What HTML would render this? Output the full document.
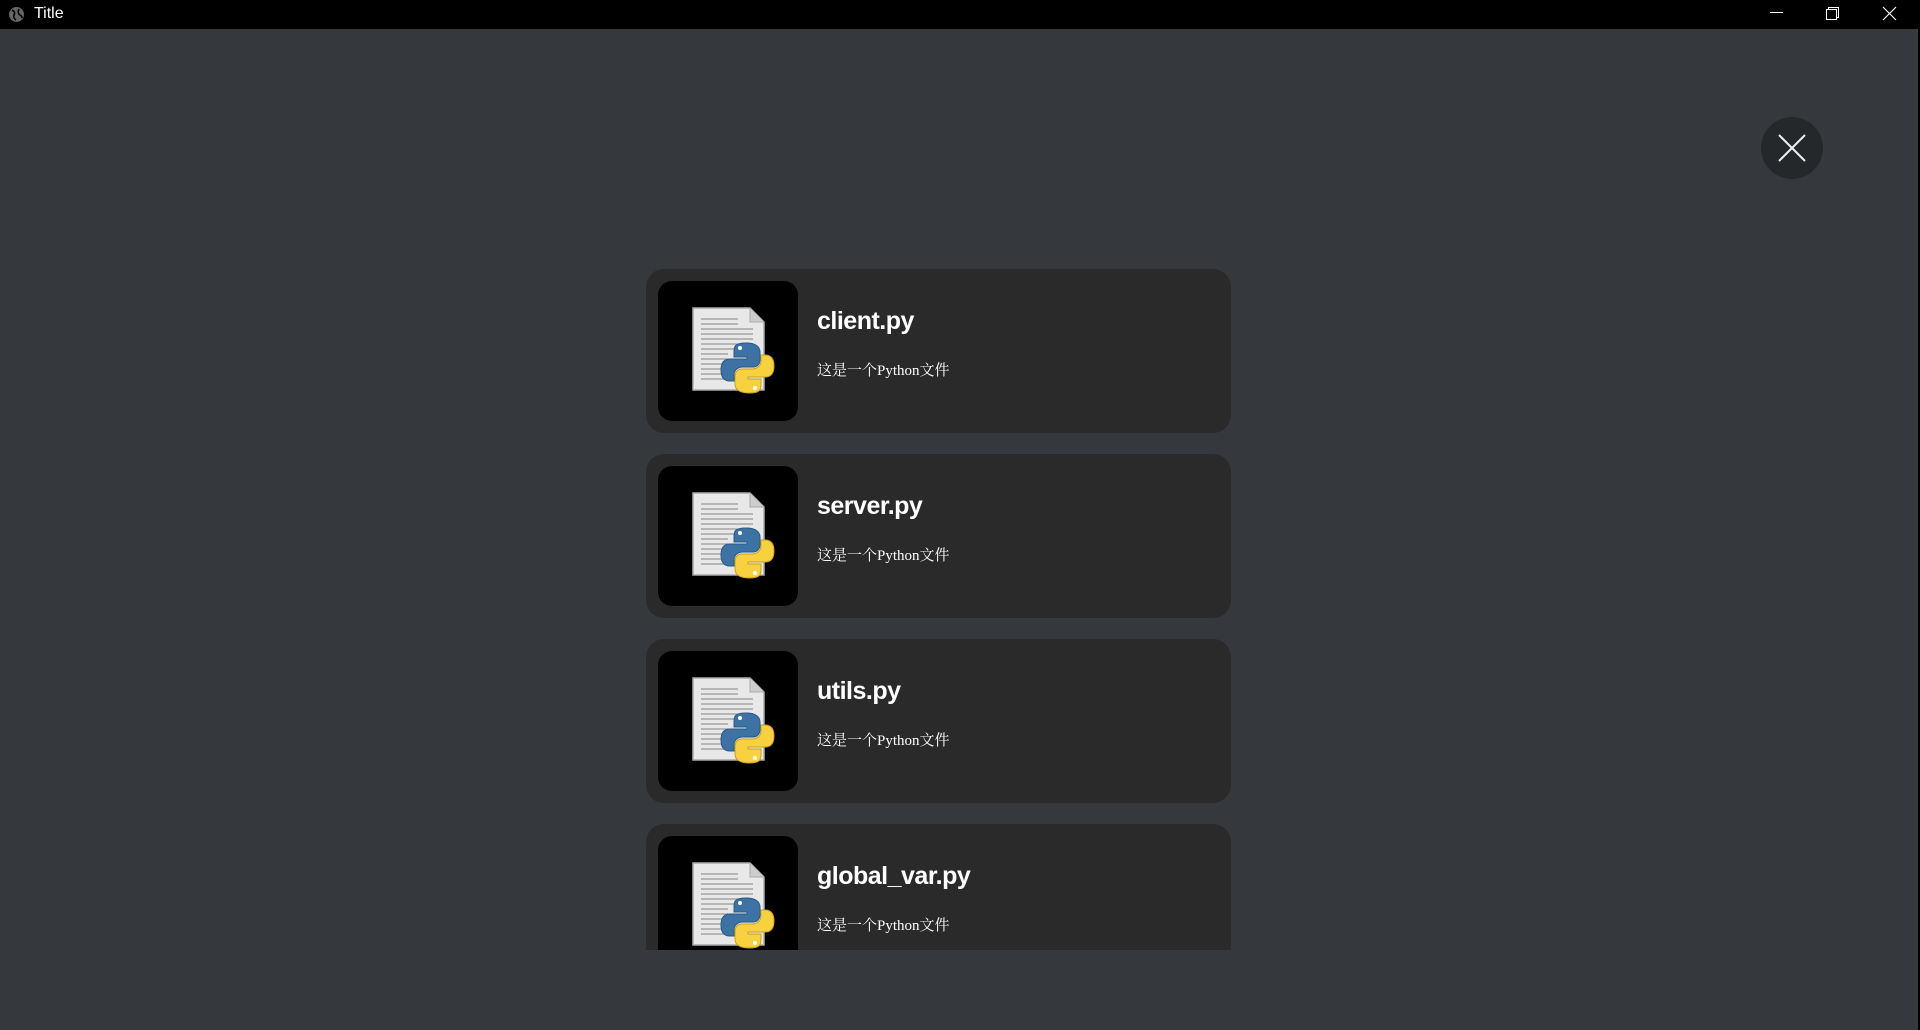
<!DOCTYPE html>
<html><head><meta charset="utf-8"><style>
*{margin:0;padding:0;box-sizing:border-box}
body{width:1920px;height:1030px;background:#35383d;position:relative;overflow:hidden;font-family:"Liberation Sans","Noto Sans CJK SC",sans-serif}
.tb{position:absolute;left:0;top:0;width:1920px;height:29px;background:#000}
.tb .t{position:absolute;left:34px;top:5px;color:#fff;font-size:16px}
.strip{position:absolute;right:0;top:0;width:2px;height:1030px;background:#000}
.cb{position:absolute;left:1761px;top:117px;width:62px;height:62px;border-radius:50%;background:#25282b}
.list{position:absolute;left:646px;top:269px;width:585px;height:681px;overflow:hidden}
.card{position:absolute;left:0;width:585px;height:164px;background:#2a2a2a;border-radius:18px}
.box{position:absolute;left:12px;top:12px;width:140px;height:140px;background:#000;border-radius:14px}
.nm{position:absolute;left:171px;top:38px;color:#fff;font-size:25px;font-weight:bold;letter-spacing:-0.5px}
.ds{position:absolute;left:171px;top:90px;color:#fff;font-size:15px;font-family:"Liberation Serif","Noto Serif CJK SC",serif}
</style></head><body>
<div class="tb">
<svg style="position:absolute;left:8px;top:6px" width="17" height="17" viewBox="0 0 17 17"><circle cx="8.5" cy="8.5" r="7.5" fill="#666"/><path d="M4 4 Q8 6 6 9 Q5 12 8 14 M11 3 Q9 7 12 9 Q14 10 14 12" stroke="#000" stroke-width="1.6" fill="none"/></svg>
<div class="t">Title</div>
<svg style="position:absolute;left:1760px;top:0" width="160" height="29" viewBox="0 0 160 29"><path d="M10 12.5H23" stroke="#fff" stroke-width="1"/><rect x="66.5" y="9.5" width="10" height="10" fill="none" stroke="#fff"/><path d="M68.5 9.5V7.5H78.5V17.5H76.5" fill="none" stroke="#fff"/><path d="M123 7L136 20M136 7L123 20" stroke="#fff" stroke-width="1.1"/></svg>
</div>
<div class="strip"></div>
<div class="cb"><svg width="62" height="62" viewBox="0 0 62 62"><path d="M18 18L44 44M44 18L18 44" stroke="#eee" stroke-width="2"/></svg></div>
<svg width="0" height="0" style="position:absolute"><defs>
<g id="ic">
<path d="M35 27H92L106 41V109H35Z" fill="#e8e8e8" stroke="#aaa" stroke-width="1.5"/>
<path d="M92 27V41H106" fill="#ccc" stroke="#aaa" stroke-width="1"/>
<g stroke="#999" stroke-width="1.2"><path d="M43 38H80M43 43H80M43 48H95M43 53H95M43 58H95M43 63H95M43 68H80M43 73H70M43 78H70M43 83H70M43 88H70M43 93H70M43 98H70"/></g>
<path d="M88 62C76 62 76 66 76 71V76H89V78H72C66 78 63 82 63 89C63 96 66 100 72 100H76V94C76 89 80 86 85 86H95C99 86 102 83 102 79V71C102 66 98 62 88 62Z" fill="#3c72a4" stroke="#2a5a88"/>
<path d="M91 112C103 112 103 108 103 103V98H90V96H107C113 96 116 92 116 85C116 78 113 74 107 74H103V80C103 85 99 88 94 88H84C80 88 77 91 77 95V103C77 108 81 112 91 112Z" fill="#f7d23e" stroke="#c8a020"/>
<circle cx="82" cy="67" r="2" fill="#fff"/><circle cx="97" cy="107" r="2" fill="#fff"/>
</g></defs></svg>
<div class="list">
<div class="card" style="top:0"><div class="box"><svg width="140" height="140"><use href="#ic"/></svg></div><div class="nm">client.py</div><div class="ds">这是一个Python文件</div></div>
<div class="card" style="top:185px"><div class="box"><svg width="140" height="140"><use href="#ic"/></svg></div><div class="nm">server.py</div><div class="ds">这是一个Python文件</div></div>
<div class="card" style="top:370px"><div class="box"><svg width="140" height="140"><use href="#ic"/></svg></div><div class="nm">utils.py</div><div class="ds">这是一个Python文件</div></div>
<div class="card" style="top:555px"><div class="box"><svg width="140" height="140"><use href="#ic"/></svg></div><div class="nm">global_var.py</div><div class="ds">这是一个Python文件</div></div>
</div>
</body></html>
